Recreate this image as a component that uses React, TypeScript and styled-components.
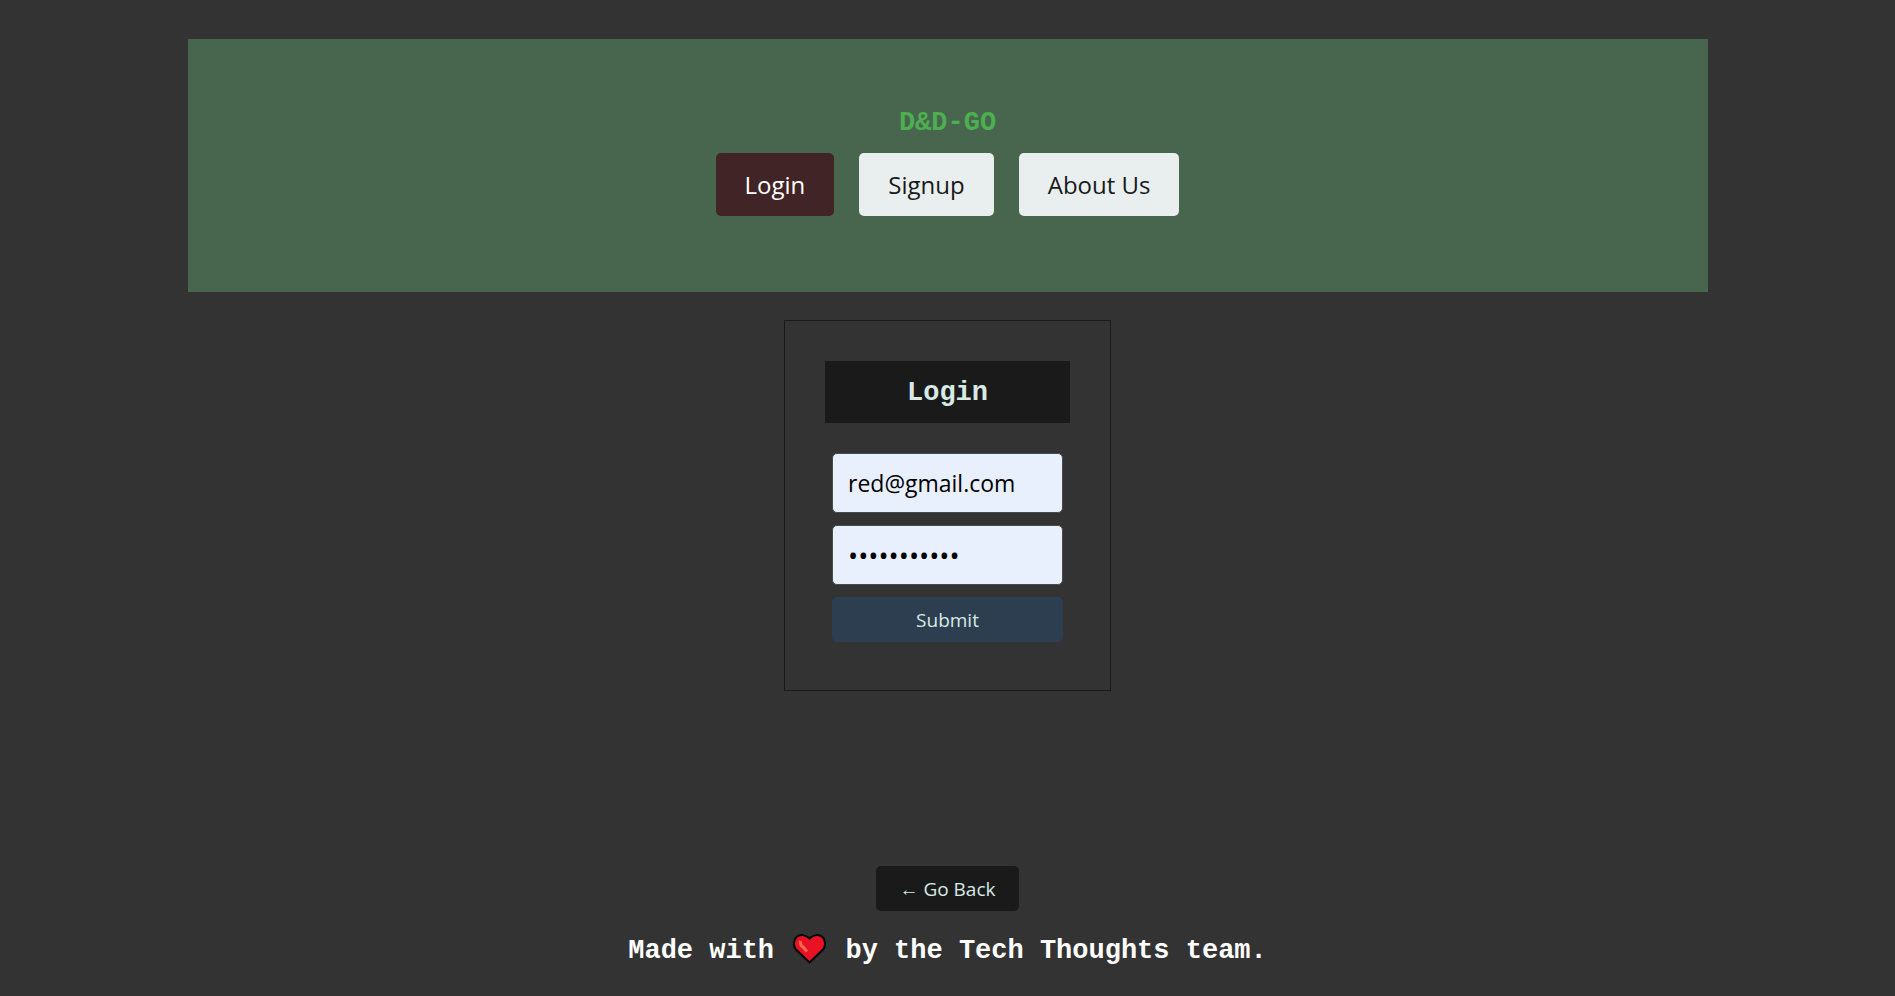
import React from "react";
import styled, { createGlobalStyle } from "styled-components";

const GlobalStyle = createGlobalStyle`
  *, *::before, *::after { box-sizing: border-box; }
  body {
    margin: 0;
    background: #333333;
    color: #ffffff;
    font-family: "Open Sans", "Noto Sans", sans-serif;
  }
`;

const mono = `"Liberation Mono", monospace`;

const Page = styled.div`
  min-height: 100vh;
  display: flex;
  flex-direction: column;
  align-items: center;
  padding: 39px 16px 27px;
`;

const Header = styled.header`
  width: 100%;
  max-width: 1520px;
  display: flex;
  flex-direction: column;
  align-items: center;
  gap: 14px;
  padding: 68px 16px 76px;
  background: #48664e;
`;

const Brand = styled.h1`
  margin: 0;
  font: bold 27px/32px ${mono};
  color: #4caf50;
`;

const Nav = styled.nav`
  display: flex;
  flex-wrap: wrap;
  justify-content: center;
  gap: 25px;
`;

const NavLink = styled.a<{ $active?: boolean }>`
  padding: 15px 29px;
  border-radius: 5px;
  font-size: 24px;
  line-height: 33px;
  text-decoration: none;
  color: ${(p) => (p.$active ? "#ffffff" : "#1a1a1a")};
  background: ${(p) => (p.$active ? "#412425" : "#e9efef")};
`;

const Card = styled.main`
  width: 327px;
  max-width: 100%;
  margin-top: 28px;
  padding: 40px 40px 48px;
  border: 1px solid #1a1a1a;
`;

const CardTitle = styled.h2`
  margin: 0 0 30px;
  padding: 16px 15px 14px;
  background: #1a1a1a;
  color: #d8e9e6;
  font: bold 27px/32px ${mono};
  text-align: center;
`;

const Form = styled.form`
  display: flex;
  flex-direction: column;
  gap: 12px;
  padding: 0 7px;
`;

const Field = styled.input`
  width: 100%;
  height: 60px;
  padding: 0 15px;
  border: 1px solid #4a4a4a;
  border-radius: 5px;
  background: #e8f0fe;
  color: #000000;
  font: 23px "Open Sans", "Noto Sans", sans-serif;

  &[type="password"] {
    font-size: 27px;
  }
`;

const Button = styled.button<{ $tone: string }>`
  height: 45px;
  padding: 0 23px;
  border: 0;
  border-radius: 5px;
  background: ${(p) => p.$tone};
  color: #d8e9e6;
  font: 19px "Open Sans", "Noto Sans", sans-serif;
  cursor: pointer;
`;

const Footer = styled.footer`
  margin-top: auto;
  display: flex;
  flex-direction: column;
  align-items: center;
  gap: 22px;
`;

const Credit = styled.p`
  margin: 0;
  font: bold 27px/36px ${mono};
  text-align: center;
`;

const Heart = styled.svg`
  width: 33px;
  height: 30px;
  margin: 0 3px;
  vertical-align: -6px;
`;

export default function App() {
  return (
    <>
      <GlobalStyle />
      <Page>
        <Header>
          <Brand>D&amp;D-GO</Brand>
          <Nav>
            <NavLink href="#login" $active>Login</NavLink>
            <NavLink href="#signup">Signup</NavLink>
            <NavLink href="#about">About Us</NavLink>
          </Nav>
        </Header>
        <Card>
          <CardTitle>Login</CardTitle>
          <Form onSubmit={(e) => e.preventDefault()}>
            <Field type="email" aria-label="Email" defaultValue="red@gmail.com" />
            <Field type="password" aria-label="Password" defaultValue="redpassword" />
            <Button type="submit" $tone="#2c3e50">Submit</Button>
          </Form>
        </Card>
        <Footer>
          <Button type="button" $tone="#1a1a1a">← Go Back</Button>
          <Credit>
            Made with{" "}
            <Heart viewBox="0 0 33 30" role="img" aria-label="love">
              <path
                d="M16.500 28.500L3 15.500C0 12 .5 6 3.500 3C7 0 12.500 .500 16.500 4.500C20.500 .500 26 0 29.500 3C32.500 6 33 12 30 15.500Z"
                fill="#e81224"
                stroke="#000000"
                strokeWidth="2"
              />
              <path d="M7.500 7Q6.500 11 10 13L14 17.500" fill="none" stroke="#f4694d" strokeWidth="3" />
            </Heart>
            {" "}by the Tech Thoughts team.
          </Credit>
        </Footer>
      </Page>
    </>
  );
}
